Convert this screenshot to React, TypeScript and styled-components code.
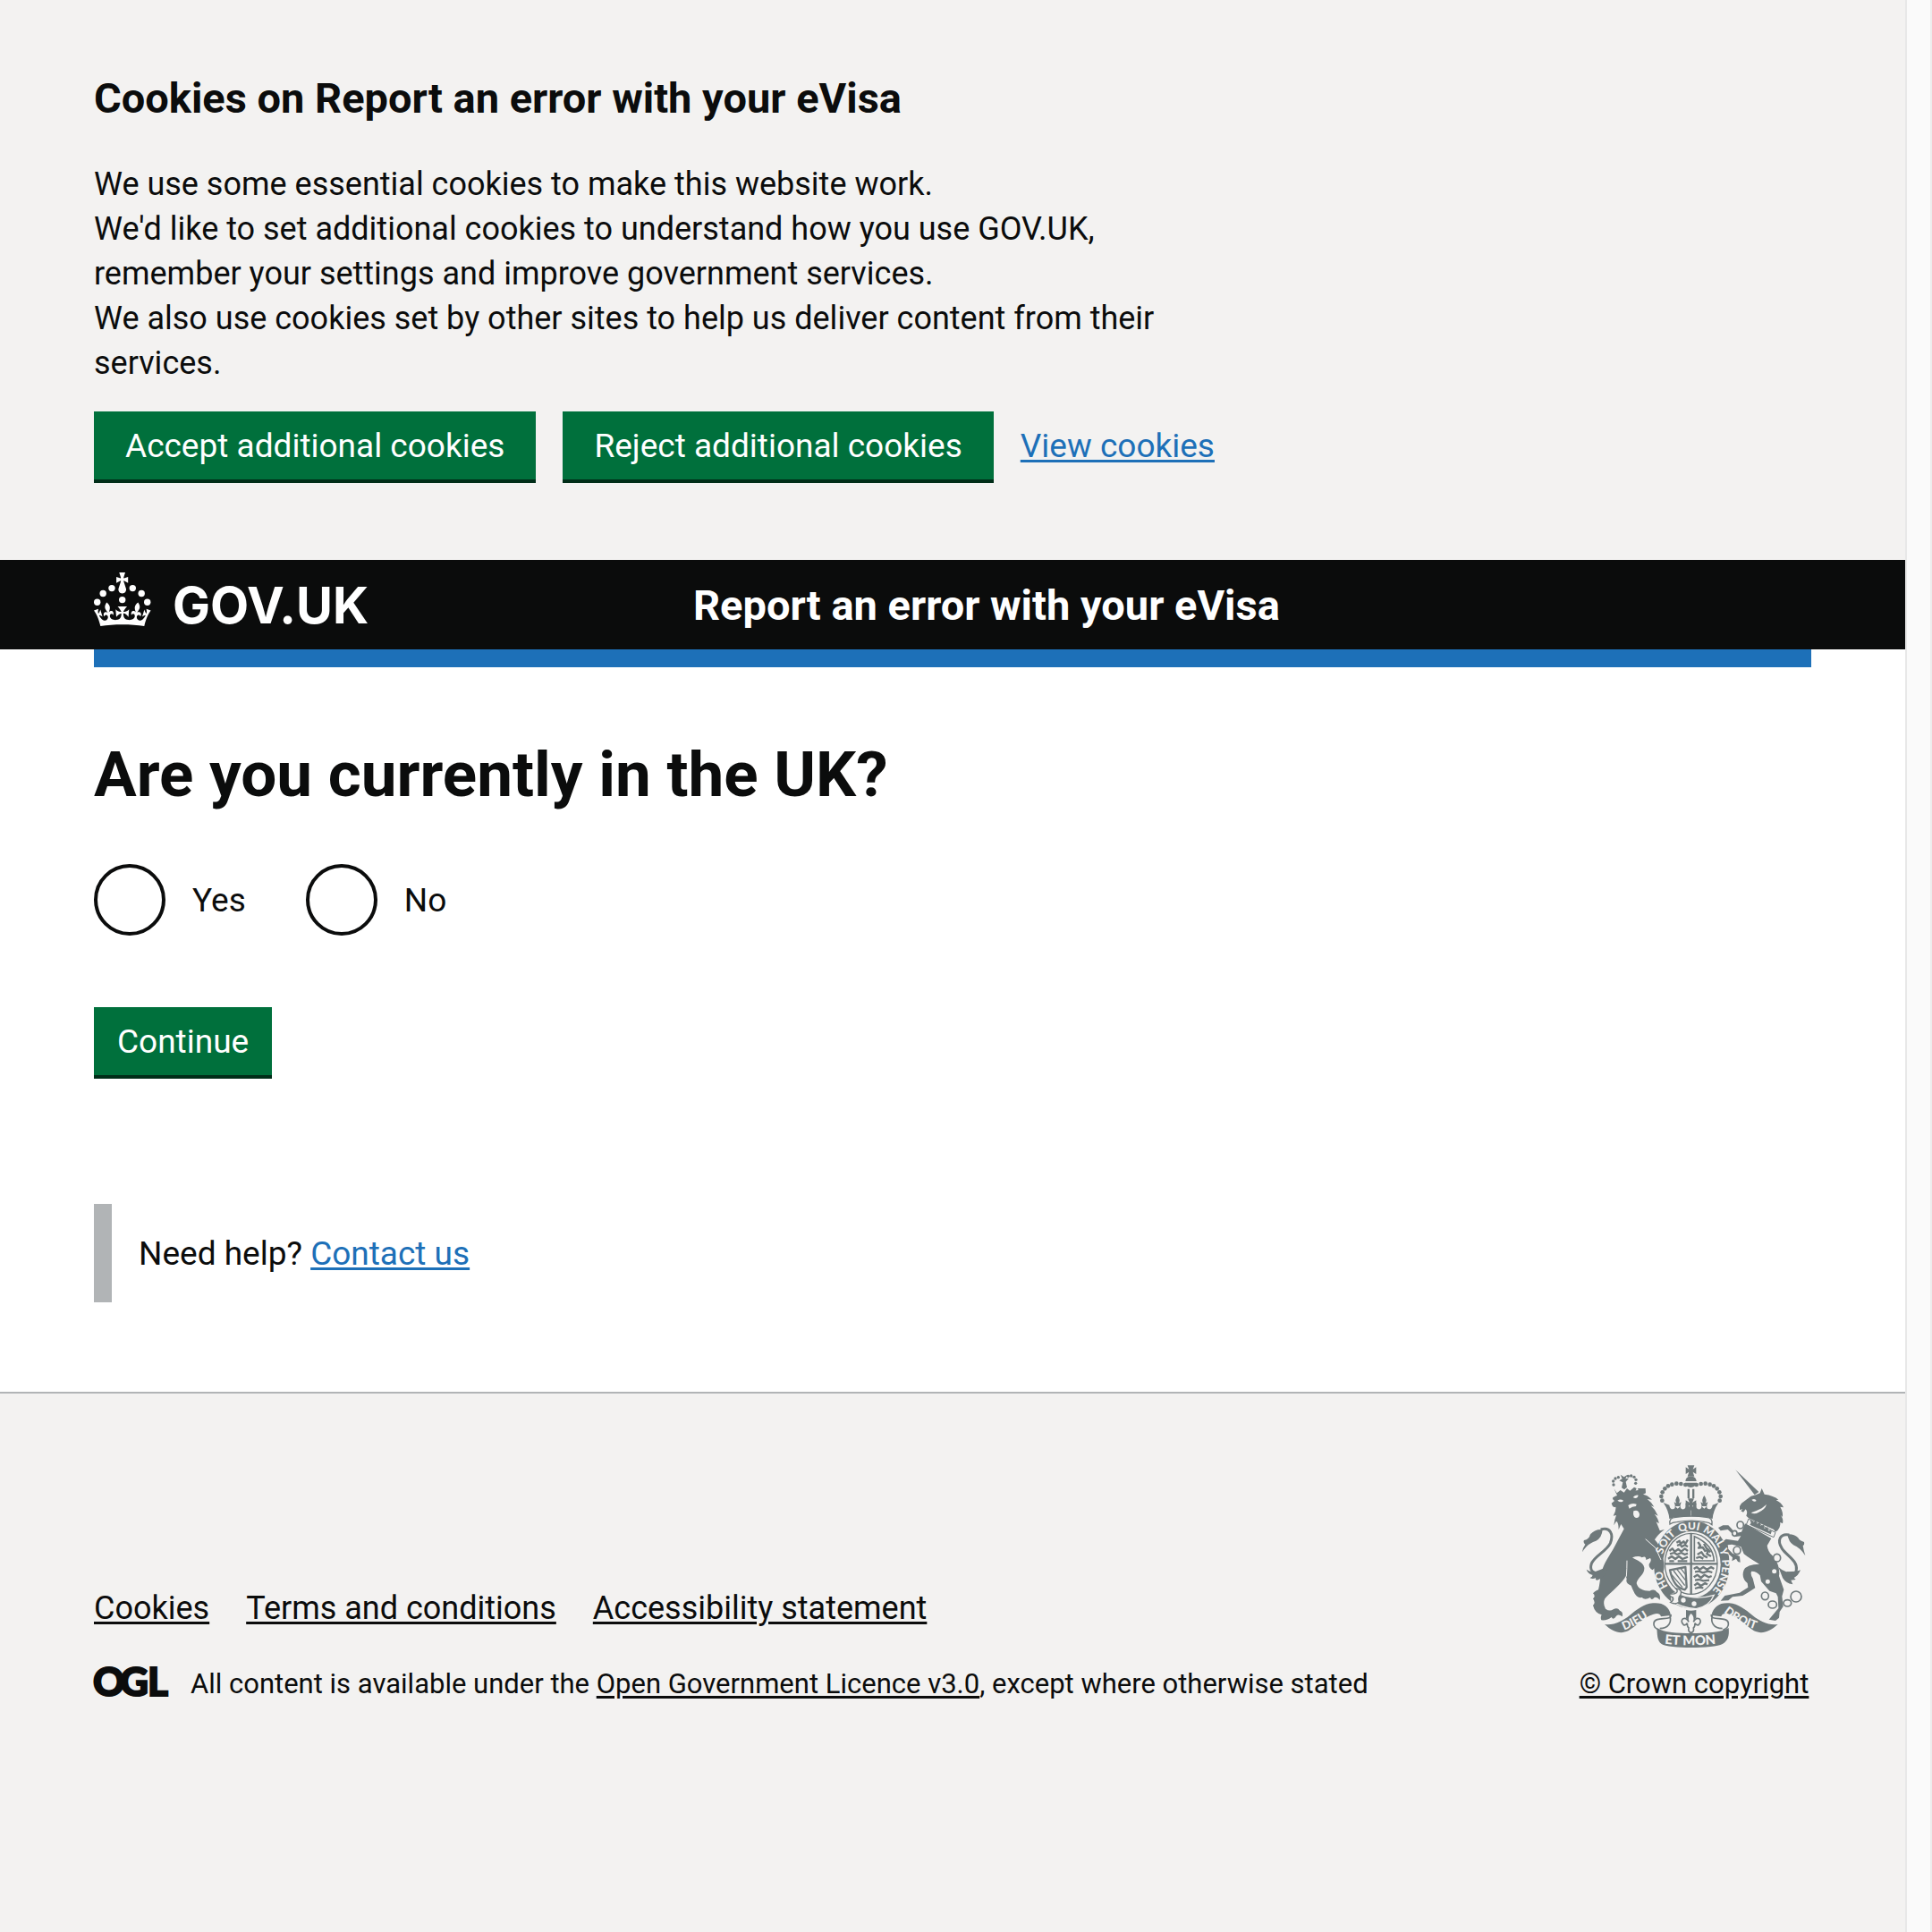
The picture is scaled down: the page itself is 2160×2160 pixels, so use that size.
import React from 'react';
import styled, { createGlobalStyle } from 'styled-components';

const color = {
  text: '#0b0c0c',
  white: '#ffffff',
  grey: '#f3f2f1',
  border: '#b1b4b6',
  crest: '#6f797b',
  link: '#1d70b8',
  green: '#00703c',
  greenShadow: '#002d18',
};

const GlobalStyle = createGlobalStyle`
  *, *::before, *::after { box-sizing: border-box; }
  body {
    margin: 0;
    background: ${color.grey};
    color: ${color.text};
    font-family: Roboto, "Liberation Sans", Arial, sans-serif;
  }
`;

const Window = styled.div`
  display: grid;
  grid-template-columns: minmax(0, 1fr) 30px;
  min-height: 100vh;
`;

const Page = styled.div`
  display: flex;
  flex-direction: column;
`;

const ScrollTrack = styled.div`
  background: #fafafa;
  border-left: 2px solid #e8e8e8;
  border-right: 2px solid #ededed;
`;

const Container = styled.div`
  max-width: 1920px;
  margin: 0 auto;
  width: calc(100% - 60px);
`;

const Link = styled.a<{ $plain?: boolean }>`
  color: ${p => (p.$plain ? color.text : color.link)};
  text-decoration: underline;
  text-decoration-thickness: 3px;
  text-underline-offset: 3px;
`;

const CookieBanner = styled.section`
  background: ${color.grey};
  padding: 80px 0 86px;
`;

const CookieHeading = styled.h2`
  margin: 0 0 41px;
  font-size: 47px;
  line-height: 60px;
  font-weight: 700;
`;

const CookieText = styled.p`
  margin: 0 0 29px;
  max-width: 1260px;
  font-size: 36px;
  line-height: 50px;
`;

const ButtonRow = styled.div`
  display: flex;
  flex-wrap: wrap;
  align-items: baseline;
  gap: 30px;
  font-size: 37px;
  line-height: 50px;
`;

const Button = styled.button<{ $wide?: boolean }>`
  height: 80px;
  padding: 2px ${p => (p.$wide ? 35 : 26)}px 0;
  border: 0;
  border-bottom: 4px solid ${color.greenShadow};
  border-radius: 0;
  background: ${color.green};
  color: ${color.white};
  font: inherit;
  font-size: 37px;
  line-height: 50px;
  cursor: pointer;
`;

const Header = styled.header`
  background: ${color.text};
  color: ${color.white};
`;

const HeaderRow = styled(Container)`
  display: grid;
  grid-template-columns: 1fr 2fr;
  align-items: center;
  min-height: 100px;
  padding: 14px 0 12px;
`;

const HomeLink = styled.a`
  display: flex;
  align-items: flex-start;
  gap: 24px;
  color: inherit;
  text-decoration: none;
`;

const Wordmark = styled.span`
  font-family: Inter, Roboto, sans-serif;
  font-size: 56px;
  line-height: 74px;
  font-weight: 700;
`;

const ServiceName = styled.a`
  padding-left: 30px;
  color: inherit;
  text-decoration: none;
  font-size: 47px;
  line-height: 60px;
  font-weight: 700;
`;

const BlueBar = styled(Container)`
  height: 20px;
  background: ${color.link};
`;

const Main = styled.main`
  background: ${color.white};
  padding-bottom: 100px;
`;

const Question = styled.fieldset`
  margin: 0 0 80px;
  padding: 80px 0 0;
  border: 0;
  min-width: 0;
`;

const Legend = styled.legend`
  float: left;
  width: 100%;
  margin-bottom: 60px;
  padding: 0;
`;

const Title = styled.h1`
  margin: 0;
  font-size: 71px;
  line-height: 80px;
  font-weight: 700;
`;

const Radios = styled.div`
  clear: both;
  display: flex;
  flex-wrap: wrap;
  gap: 67px;
`;

const RadioItem = styled.div`
  display: flex;
  align-items: center;
`;

const RadioInput = styled.input`
  appearance: none;
  width: 80px;
  height: 80px;
  margin: 0;
  border: 4px solid ${color.text};
  border-radius: 50%;
  background: ${color.white};
  cursor: pointer;

  &:checked {
    background: radial-gradient(circle, ${color.text} 20px, ${color.white} 21px);
  }
`;

const RadioLabel = styled.label`
  padding: 2px 0 0 30px;
  font-size: 37px;
  line-height: 50px;
  cursor: pointer;
`;

const Inset = styled.div`
  margin-top: 140px;
  padding: 31px 30px 29px;
  border-left: 20px solid ${color.border};
  font-size: 37px;
  line-height: 50px;
`;

const Footer = styled.footer`
  flex: 1;
  border-top: 2px solid ${color.border};
  background: ${color.grey};
  padding: 80px 0;
`;

const FooterRow = styled(Container)`
  display: flex;
  align-items: flex-end;
  justify-content: space-between;
  gap: 60px;
`;

const FooterMain = styled.div`
  display: flex;
  flex-direction: column;
  gap: 40px;
`;

const FooterLinks = styled.ul`
  display: flex;
  flex-wrap: wrap;
  gap: 0 41px;
  margin: 0;
  padding: 0;
  list-style: none;
  font-size: 36px;
  line-height: 50px;
`;

const Licence = styled.div`
  display: flex;
  align-items: flex-start;
  gap: 26px;
  font-size: 31px;
  line-height: 40px;
`;

const Copyright = styled.div`
  display: flex;
  flex-direction: column;
  align-items: center;
  gap: 19px;
  min-width: 262px;
  font-size: 31px;
  line-height: 40px;
  white-space: nowrap;
`;

const Logo = styled.svg`
  flex: none;
  overflow: visible;
`;

const Crown = () => (
  <Logo width="64" height="60" viewBox="0 0 64 60" fill="currentColor" aria-hidden="true">
    <circle cx="20" cy="17.6" r="3.7" />
    <circle cx="10.2" cy="23.5" r="3.7" />
    <circle cx="3.7" cy="33.2" r="3.7" />
    <circle cx="31.7" cy="30.6" r="3.7" />
    <circle cx="43.3" cy="17.6" r="3.7" />
    <circle cx="53.2" cy="23.5" r="3.7" />
    <circle cx="59.7" cy="33.2" r="3.7" />
    <path d="M33.1,9.8c.2-.1.3-.3.5-.5l4.6,2.4v-6.8l-4.6,1.5c-.1-.2-.3-.3-.5-.5l1.9-5.9h-6.7l1.9,5.9c-.2.1-.3.3-.5.5l-4.6-1.5v6.8l4.6-2.4c.1.2.3.3.5.5l-2.6,8c-.9,2.8,1.2,5.7,4.1,5.7h0c3,0,5.1-2.9,4.1-5.7l-2.6-8ZM37,37.9s-3.4,3.8-4.1,6.1c2.2,0,4.2-.5,6.4-2.8l-.7,8.5c-2-2.8-4.4-4.1-5.7-3.8.1,3.1.5,6.7,5.8,7.2,3.7.3,6.7-1.5,7-3.8.4-2.6-2-4.3-3.7-1.6-1.4-4.5,2.4-6.1,4.9-3.2-1.9-4.5-1.8-7.7,2.4-10.9,3,4,2.6,7.3-1.2,11.1,2.4-1.3,6.2,0,4,4.6-1.2-2.8-3.7-2.2-4.2.2-.3,1.7.7,3.7,3,4.2,1.9.3,4.7-.9,7-5.9-1.3,0-2.4.7-3.9,1.7l2.4-8c.6,2.3,1.4,3.7,2.2,4.5.6-1.6.5-2.8,0-5.3l5,1.8c-2.6,3.6-5.2,8.7-7.3,17.5-7.4-1.1-15.7-1.7-24.5-1.7h0c-8.8,0-17.1.6-24.5,1.7-2.1-8.9-4.7-13.9-7.3-17.5l5-1.8c-.5,2.5-.6,3.7,0,5.3.8-.8,1.6-2.3,2.2-4.5l2.4,8c-1.5-1-2.6-1.7-3.9-1.7,2.3,5,5.2,6.2,7,5.9,2.3-.4,3.3-2.4,3-4.2-.5-2.4-3-3.1-4.2-.2-2.2-4.6,1.6-6,4-4.6-3.7-3.7-4.2-7.1-1.2-11.1,4.2,3.2,4.3,6.4,2.4,10.9,2.5-2.8,6.3-1.3,4.9,3.2-1.8-2.7-4.1-1-3.7,1.6.3,2.3,3.3,4.1,7,3.8,5.4-.5,5.7-4.2,5.8-7.2-1.3-.2-3.7,1-5.7,3.8l-.7-8.5c2.2,2.3,4.2,2.7,6.4,2.8-.7-2.3-4.1-6.1-4.1-6.1h10.6,0Z" />
  </Logo>
);

const OglLogo = () => (
  <Logo width="82" height="34" viewBox="0 0 82 34" role="img" aria-label="Open Government Licence">
    <g fill={color.text} stroke={color.text} strokeWidth="2" fontFamily="Lato, sans-serif" fontWeight="900" fontSize="44">
      <text x="-1" y="33">O</text>
      <text x="29" y="33">G</text>
      <text x="60" y="33">L</text>
    </g>
  </Logo>
);

/* Beads of the two crown arches, left half; the right half is mirrored. */
const beads = [
  [404, 118], [389, 115], [374, 114], [359, 117], [346, 122], [335, 131],
  [327, 143], [323, 157], [326, 171],
];

const CrownArch = () => (
  <g>
    {beads.map(([x, y]) => <circle key={x} cx={x} cy={y} r="7" />)}
    <path d="M330 178L350 186Q352 200 362 200Q372 198 368 188Q374 196 378 198Q384 196 387 188Q386 202 398 200Q408 196 404 180L412 182L422 205V226Q385 224 350 232Q348 205 330 178Z" />
    <path d="M378 154Q388 168 382 180L390 176L386 190H370L366 176L374 180Q367 168 378 154Z" />
  </g>
);

const Arms = () => {
  const g = color.crest;
  const w = color.grey;
  return (
    <Logo width="252" height="206" viewBox="55 52 756 618" fill={g} role="img" aria-label="Royal coat of arms">
      {/* royal crown */}
      <path d="M411 53H434L429 66L440 59V82L429 75L434 90H411L416 75L405 82V59L416 66Z" />
      <path d="M404 106Q405 90 422 90Q440 90 441 106Z" />
      <path d="M404 111H441Q438 126 422 127Q406 126 404 111Z" />
      <path d="M411 132H418V163H411ZM427 132H434V163H427Z" />
      <path d="M412 164H433L427 178L440 170V193L427 187L434 204H411L418 187L405 193V170L418 178Z" />
      <CrownArch />
      <g transform="translate(845 0) scale(-1 1)"><CrownArch /></g>

      {/* garter */}
      <ellipse cx="425" cy="386" rx="127" ry="147" />
      <ellipse cx="425" cy="386" rx="97" ry="112" fill={w} />
      <path d="M352 250Q348 228 372 227Q425 220 474 227Q497 228 493 252Q484 244 470 243Q425 234 375 243Q360 244 352 250Z" fill={w} stroke={g} strokeWidth="4" />
      <defs>
        <path id="motto-ring" d="M425 503A102 117 0 1 1 426 503" />
        <path id="motto-left" d="M198 606Q250 586 302 545" />
        <path id="motto-right" d="M532 546Q580 586 650 606" />
        <path id="motto-base" d="M334 651Q422 661 520 650" />
      </defs>

      {/* shield quarters */}
      <ellipse cx="423" cy="383" rx="88" ry="102" fill={w} stroke={g} strokeWidth="4" />
      <path d="M335 383H511M423 281V485" stroke={g} strokeWidth="7" />
      <path d="M434 291V373H500Q497 318 434 291Z" fill="none" stroke={g} strokeWidth="5" />
      <g fill="none" stroke={g} strokeWidth="7" strokeLinejoin="round">
        <path d="M374 312L384 306L388 316L398 308L404 316L412 302M376 322L386 318L392 326L402 320L412 326M350 340L360 332L368 342L380 334L390 342L402 332L412 340M352 350L366 346L376 352L390 346L402 352L412 348M346 366L358 358L370 367L382 358L394 367L412 360M350 374H366M378 374H410" />
        <path d="M432 400L442 394L452 402L464 394L476 402L490 394L500 400M436 410L450 408L462 413L480 408L494 412M432 428L444 420L456 430L468 420L482 428L492 424M436 438L450 436L464 440L484 438M434 456L444 448L456 457L470 448L478 452M436 466L450 462L464 464" />
        <path d="M446 310L454 322L448 330L462 328L470 340L482 336L476 350L490 358M444 352L458 344L466 356L478 362M440 364L452 360L464 366M466 316L474 330L488 344" />
        <path d="M352 404L404 394L408 462L402 470Q364 464 352 404Z" />
      </g>
      <path d="M364 406L402 456M376 402L404 438M388 398L405 420M358 420L394 462" stroke={g} strokeWidth="4" />

      {/* strap and buckle */}
      <path d="M357 486Q372 476 388 485Q440 506 500 488Q484 527 440 534Q390 532 358 506Z" stroke={w} strokeWidth="4" />
      <circle cx="397" cy="505" r="8" fill={w} />
      <circle cx="433" cy="517" r="8" fill={w} />
      <path d="M372 466Q394 468 388 486Q378 496 383 510Q372 522 354 512Q366 506 362 496Q350 492 350 484Q366 486 374 480Q380 474 372 466Z" fill={w} stroke={g} strokeWidth="4" />
      <path d="M406 538Q422 542 440 538V566H406Z" />
      <path d="M423 546Q440 562 431 578Q438 562 450 567Q460 576 448 588Q440 590 436 582Q436 594 431 598Q434 612 423 614Q412 612 415 598Q410 594 410 582Q406 590 398 588Q386 576 396 567Q408 562 415 578Q406 562 423 546Z" fill={w} stroke={g} strokeWidth="5" />

      {/* motto ribbon */}
      <path d="M355 553C360 578 302 556 298 582C296 596 306 600 316 606M318 600C348 600 358 580 352 556" fill="none" stroke={g} strokeWidth="5" />
      <path d="M491 553C486 578 544 556 548 582C550 596 540 600 530 606M528 600C498 600 488 580 494 556" fill="none" stroke={g} strokeWidth="5" />
      <path d="M133 586C165 590 192 576 217 556C242 536 264 518 295 515C328 512 350 526 355 556L322 560C318 545 300 550 285 557C255 570 237 594 212 608C186 620 160 612 133 586Z" />
      <path d="M714 586C681 590 654 576 629 556C604 536 582 518 551 515C520 512 498 526 491 556L524 560C528 545 546 550 561 557C591 570 611 594 634 608C660 620 686 612 714 586Z" />
      <path d="M308 598C332 614 378 616 423 616C468 616 524 614 549 598C552 625 546 642 528 652C500 668 346 668 324 652C308 640 310 620 308 598Z" />
      <g fill={w} fontFamily="Lato, sans-serif" fontWeight="900" fontSize="39">
        <text><textPath href="#motto-left">DIEU</textPath></text>
        <text><textPath href="#motto-right">DROIT</textPath></text>
        <text fontSize="44"><textPath href="#motto-base">ET MON</textPath></text>
      </g>

      {/* lion */}
      <path d="M164 130L174 146L186 136L198 144L208 130L218 138L232 126L240 130L234 146Q205 142 176 156Z" />
      {[[163, 118], [162, 106], [169, 97], [179, 93], [212, 89], [222, 88], [232, 92], [238, 101], [237, 113]].map(([x, y]) => <circle key={`${x}-${y}`} cx={x} cy={y} r="5" />)}
      <path d="M186 84L198 92L210 84L203 98L214 96L204 108L208 126L199 134L190 128L194 110L182 104L192 98Z" />
      <path d="M176 154Q205 140 246 136L244 130L270 130L271 146L262 150Q276 152 292 168L276 166Q292 178 299 192L288 188Q304 202 312 222L300 216Q314 232 315 248L306 242L318 272L334 268Q312 284 301 302Q322 324 328 362Q336 390 330 408Q316 394 310 404Q304 390 294 404Q280 396 282 384Q292 372 286 364L272 370Q272 354 258 362Q248 354 226 362C240 372 262 376 266 396C268 420 244 428 240 448C244 466 262 474 284 474Q300 466 308 478Q322 484 318 504Q308 492 300 496Q290 508 286 496Q268 506 258 496C238 500 230 476 222 456C208 450 204 444 207 434L204 424C190 452 152 478 134 500Q126 516 136 534Q150 544 162 536Q176 528 184 540Q196 544 192 560Q180 550 172 558Q162 574 156 562Q142 574 122 572Q118 564 123 554Q100 548 94 522Q104 514 94 500Q104 492 94 482Q104 472 112 470C120 440 116 424 126 400C136 370 160 340 170 318L198 266L188 250L180 268Q180 244 172 240L164 254Q166 234 172 220L162 222Q172 206 170 192Q160 196 156 180L166 172Q156 164 162 160Q172 154 176 154Z" />
      <path d="M176 171Q186 164 196 171Q190 180 176 171ZM228 160Q236 150 246 153Q242 168 228 160ZM212 187Q224 178 240 183L238 190L226 192L216 198Z" fill={w} />
      <path d="M230 206Q246 200 250 216Q250 230 238 229Q226 226 230 206Z" fill={w} />
      <path d="M270 300L304 330L322 370M208 372Q208 398 206 426" fill="none" stroke={w} strokeWidth="3" />
      <path d="M120 268C152 258 164 284 152 314C138 342 100 356 89 382C82 404 92 418 118 414" fill="none" stroke={g} strokeWidth="9" />
      <path d="M58 344Q60 328 68 318Q60 312 64 304Q82 300 84 286Q98 266 126 268Q124 296 104 306Q74 316 58 344ZM72 402Q88 414 104 408L132 398L124 412Q138 412 144 402Q132 430 108 438Q100 436 104 430Q92 436 84 430Q94 426 92 420Q78 418 72 402Z" />

      {/* unicorn */}
      <path d="M572 68L650 142L636 152Z" />
      <path d="M586 190L592 180L624 156L640 152L654 146L660 130L669 150Q700 154 716 168L708 170Q726 178 733 194L722 192Q732 210 730 226L724 220Q734 236 730 248L722 244Q724 266 706 276L700 268L616 230L608 222Q614 208 606 200L598 210L590 206L596 200L586 202Z" />
      <path d="M626 168Q638 162 642 172Q634 178 626 168ZM676 184Q672 200 650 210Q636 218 624 212Q642 206 660 197Z" fill={w} />
      <path d="M616 232L706 278L700 294L608 252Z" fill={w} stroke={g} strokeWidth="3" />
      <path d="M624 246L620 234L634 244L640 232L644 250L656 242L656 256L668 252L668 264L680 260L682 272L694 272L690 284L620 252Z" />
      <path d="M604 248L692 298L678 322Q680 342 696 356C712 374 722 400 718 424L734 470L728 492L732 526L720 544L718 564L706 574L684 570L704 546L716 532L714 494L708 482L686 474L658 442L654 422Q644 408 626 408Q620 416 630 432L638 464Q620 476 596 490L562 494L548 506L522 507L536 490L586 480L614 462L612 448Q590 430 600 404Q610 384 652 384Q620 366 600 350L590 326L560 318L546 320L548 334L562 348L586 358L588 378L580 376L574 366L560 374L562 362L540 342L528 310L540 300L580 306L590 290L572 292L546 268L522 272L514 262L530 254H548L572 280L592 276Z" />
      <g fill={w} stroke={g} strokeWidth="5">
        <ellipse cx="588" cy="253" rx="11" ry="12" />
        <ellipse cx="569" cy="281" rx="8" ry="9" />
        <ellipse cx="577" cy="338" rx="12" ry="13" />
        <ellipse cx="711" cy="363" rx="12" ry="13" />
        <ellipse cx="702" cy="408" rx="10" ry="10" />
        <ellipse cx="680" cy="443" rx="10" ry="10" />
        <ellipse cx="671" cy="491" rx="12" ry="13" />
        <ellipse cx="696" cy="520" rx="14" ry="12" />
        <ellipse cx="746" cy="515" rx="13" ry="11" />
        <circle cx="775" cy="493" r="18" />
      </g>
      <path d="M752 286C722 280 710 304 728 332C744 356 782 374 776 404C774 420 762 424 744 414" fill="none" stroke={g} strokeWidth="9" />
      <path d="M806 356Q800 336 798 322Q804 320 802 310Q786 306 782 296Q768 282 746 284Q750 310 766 320Q790 330 806 356ZM716 394Q726 404 742 410L776 408L790 404Q782 424 768 430L774 436L758 438L764 452Q740 448 730 430Z" />

      {/* garter motto */}
      <g fill={w} fontFamily="Lato, sans-serif" fontWeight="900" fontSize="36">
        <text><textPath href="#motto-ring" startOffset="94">HO</textPath></text>
        <text><textPath href="#motto-ring" startOffset="206">SOIT</textPath></text>
        <text><textPath href="#motto-ring" startOffset="301">QUI</textPath></text>
        <text><textPath href="#motto-ring" startOffset="380">MAL</textPath></text>
        <text><textPath href="#motto-ring" startOffset="464">Y</textPath></text>
        <text><textPath href="#motto-ring" startOffset="499">PENSE</textPath></text>
      </g>
    </Logo>
  );
};

export default function App() {
  return (
    <Window>
      <GlobalStyle />
      <Page>
        <CookieBanner aria-label="Cookies on Report an error with your eVisa">
          <Container>
            <CookieHeading>Cookies on Report an error with your eVisa</CookieHeading>
            <CookieText>
              We use some essential cookies to make this website work.<br />
              We'd like to set additional cookies to understand how you use GOV.UK, remember your settings and improve government services.<br />
              We also use cookies set by other sites to help us deliver content from their services.
            </CookieText>
            <ButtonRow>
              <Button type="button" $wide>Accept additional cookies</Button>
              <Button type="button" $wide>Reject additional cookies</Button>
              <Link href="#cookies">View cookies</Link>
            </ButtonRow>
          </Container>
        </CookieBanner>

        <Header>
          <HeaderRow>
            <HomeLink href="#home">
              <Crown />
              <Wordmark>GOV.UK</Wordmark>
            </HomeLink>
            <ServiceName href="#service">Report an error with your eVisa</ServiceName>
          </HeaderRow>
        </Header>

        <Main>
          <BlueBar />
          <Container>
            <form onSubmit={e => e.preventDefault()}>
              <Question>
                <Legend>
                  <Title>Are you currently in the UK?</Title>
                </Legend>
                <Radios>
                  <RadioItem>
                    <RadioInput type="radio" id="in-uk-yes" name="in-uk" value="yes" />
                    <RadioLabel htmlFor="in-uk-yes">Yes</RadioLabel>
                  </RadioItem>
                  <RadioItem>
                    <RadioInput type="radio" id="in-uk-no" name="in-uk" value="no" />
                    <RadioLabel htmlFor="in-uk-no">No</RadioLabel>
                  </RadioItem>
                </Radios>
              </Question>
              <Button type="submit">Continue</Button>
            </form>
            <Inset>
              Need help? <Link href="#contact">Contact us</Link>
            </Inset>
          </Container>
        </Main>

        <Footer>
          <FooterRow>
            <FooterMain>
              <FooterLinks>
                <li><Link $plain href="#cookies">Cookies</Link></li>
                <li><Link $plain href="#terms">Terms and conditions</Link></li>
                <li><Link $plain href="#accessibility">Accessibility statement</Link></li>
              </FooterLinks>
              <Licence>
                <OglLogo />
                <span>
                  All content is available under the <Link $plain href="#ogl">Open Government Licence v3.0</Link>, except where otherwise stated
                </span>
              </Licence>
            </FooterMain>
            <Copyright>
              <Arms />
              <Link $plain href="#copyright">© Crown copyright</Link>
            </Copyright>
          </FooterRow>
        </Footer>
      </Page>
      <ScrollTrack />
    </Window>
  );
}
